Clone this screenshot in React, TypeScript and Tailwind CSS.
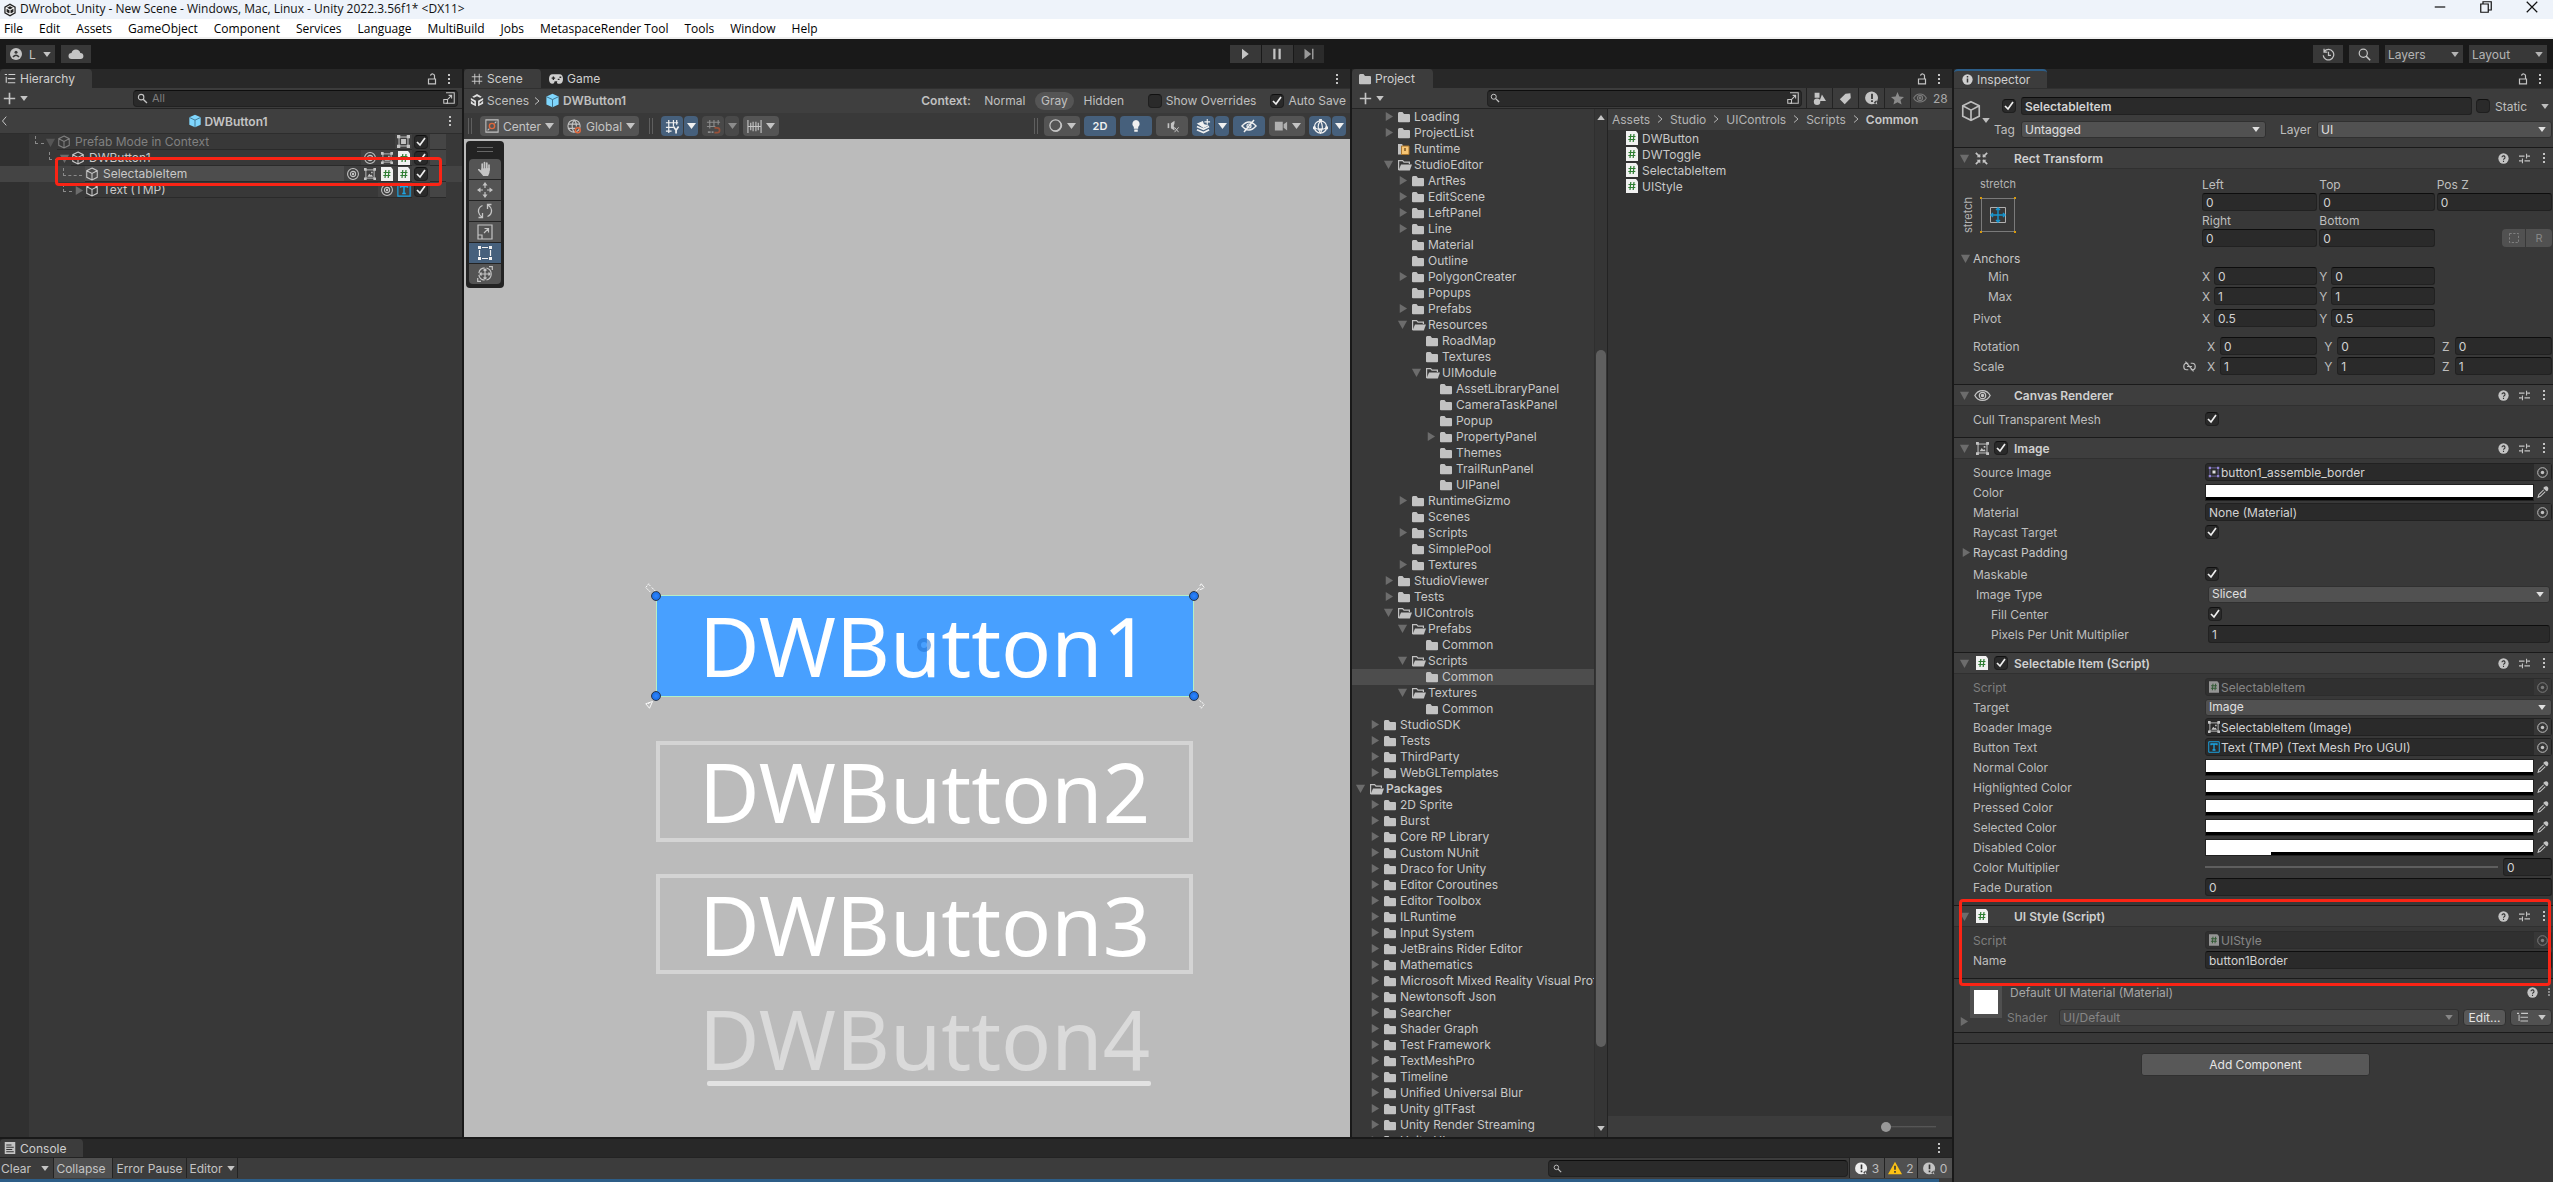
import React, { useId } from "react";

/* ---------- icons ---------- */

type IconProps = { className?: string };

function Svg({ className = "size-4", children, box = "0 0 16 16" }: IconProps & { children: React.ReactNode; box?: string }) {
  return (
    <svg viewBox={box} className={className + " shrink-0"} fill="none" stroke="currentColor" strokeWidth="1.2" aria-hidden="true">
      {children}
    </svg>
  );
}

const Down = ({ className = "w-[9px] h-[6px]" }: IconProps) => (
  <Svg className={className} box="0 0 9 6"><path d="M0 0h9L4.5 6z" fill="currentColor" stroke="none" /></Svg>
);
const Fold = ({ open, className = "size-3 text-[#6c6c6c]" }: IconProps & { open: boolean }) => (
  <Svg className={className} box="0 0 12 12">
    <path d={open ? "M1 2h10L6 11z" : "M3 1v10l8-5z"} fill="currentColor" stroke="none" />
  </Svg>
);
const Dots = ({ className = "w-2 h-3" }: IconProps) => (
  <Svg className={className} box="0 0 8 12"><path d="M3 1h2v2H3zM3 5h2v2H3zM3 9h2v2H3z" fill="currentColor" stroke="none" /></Svg>
);
const Lock = ({ className = "w-3 h-3" }: IconProps) => (
  <Svg className={className} box="0 0 12 12"><path d="M2.5 6h7v4.8h-7zM8.5 6V3.4a2 2 0 0 0-4-.8" /></Svg>
);
const Cube = ({ className = "size-[14px]" }: IconProps) => (
  <Svg className={className}><path d="M8 1.2l6 3v7.6l-6 3-6-3V4.200zM2 4.200l6 3.200 6-3.200M8 7.400v7.400" /></Svg>
);
const PrefabCube = ({ className = "size-[14px]" }: IconProps) => (
  <Svg className={className}>
    <path d="M8 .8l6.500 2.900v8.600L8 15.200l-6.500-2.900V3.700z" fill="#7fd6fd" stroke="none" />
    <path d="M1.500 3.900L8 7l6.500-3.100M8 7v8.200" stroke="#3c6d87" strokeWidth="1" />
  </Svg>
);
const Folder = ({ className = "w-3 h-[14px]" }: IconProps) => (
  <Svg className={className} box="0 0 12 14"><path d="M0 3.500Q0 2 1.200 2H4.500L6 4h5q1 0 1 1v6.500q0 .8-1 .8H1q-1 0-1-.8z" fill="#c2c2c2" stroke="none" /></Svg>
);
const FolderOpen = ({ className = "w-[14px] h-[14px]" }: IconProps) => (
  <Svg className={className} box="0 0 14 14">
    <path d="M.6 12V2.600h4L6 4.200h5.400V6" stroke="#c2c2c2" strokeWidth="1.200" />
    <path d="M3 6.500h11l-2.200 6H.5z" fill="#c2c2c2" stroke="none" />
  </Svg>
);
const RuntimeFolder = () => (
  <Svg className="w-3 h-[14px]" box="0 0 12 14">
    <path d="M0 2h4l1 1.500v9H0z" fill="#c2c2c2" stroke="none" />
    <path d="M3.500 4h7.500v8.500H3.500z" fill="#f7c574" stroke="#a9752c" strokeWidth="1" />
    <path d="M7 6v3" stroke="#7c5520" strokeWidth="1.500" />
  </Svg>
);
const Script = ({ className = "w-3 h-[14px]" }: IconProps) => (
  <Svg className={className} box="0 0 12 14">
    <path d="M0 0h10l2 2.500V14H0z" fill="#f1f1f1" stroke="none" />
    <path d="M4.800 3L4 11M8 3l-.8 8M2.500 5.500h7M2.300 8.500h7" stroke="#2e7d32" strokeWidth="1.200" />
  </Svg>
);
const Eye = ({ className = "size-4" }: IconProps) => (
  <Svg className={className}><path d="M.8 8C4 1.800 12 1.800 15.200 8 12 14.200 4 14.200.8 8z" /><circle cx="8" cy="8" r="3" /><circle cx="8" cy="8" r="1" fill="currentColor" /></Svg>
);
const Rays = ({ className = "size-[14px]" }: IconProps) => (
  <Svg className={className}>
    <circle cx="8" cy="8" r="6.200" /><circle cx="8" cy="8" r="3" /><circle cx="8" cy="8" r=".8" fill="currentColor" />
  </Svg>
);
const Picture = ({ className = "size-[13px]" }: IconProps) => (
  <Svg className={className}>
    <path d="M2.500 2.500h11v11h-11z" />
    <path d="M0 0h3.500v3.500H0zM12.500 0H16v3.500h-3.500zM0 12.500h3.500V16H0zM12.500 12.500H16V16h-3.500zM4.500 11.500l2.500-4 2 2.200 1.200-1.200 1.800 3zM9.500 5h2v2h-2z" fill="currentColor" stroke="none" />
  </Svg>
);
const RectMark = ({ className = "size-[13px]" }: IconProps) => (
  <Svg className={className}>
    <path d="M2.500 2.500h11v11h-11z" />
    <path d="M0 0h4v4H0zM12 0h4v4h-4zM0 12h4v4H0zM12 12h4v4h-4zM5 5h6v6H5z" fill="currentColor" stroke="none" />
  </Svg>
);
const SpriteMark = ({ className = "size-3" }: IconProps) => (
  <Svg className={className}>
    <path d="M2.500 2.500h11v11h-11z" stroke="#6f66a0" />
    <path d="M1 1h3v3H1zM12 1h3v3h-3zM1 12h3v3H1zM12 12h3v3h-3z" fill="#9184d6" stroke="none" />
    <path d="M6 6h4v4H6z" fill="#e0e0e0" stroke="none" />
  </Svg>
);
const TextMark = ({ className = "size-[14px]" }: IconProps) => (
  <Svg className={className}>
    <path d="M1 1h14v14H1z" stroke="#1ba6e6" strokeWidth="1.300" />
    <path d="M4 5.500V4h8v1.500M8 4v8M6 12h4" stroke="#1ba6e6" strokeWidth="1.700" />
  </Svg>
);
const Magnify = ({ className = "size-3" }: IconProps) => (
  <Svg className={className}><circle cx="6" cy="6" r="4" strokeWidth="1.600" /><path d="M9 9l5.500 5.500" strokeWidth="2" /></Svg>
);
const Picker = ({ className = "size-3" }: IconProps) => (
  <Svg className={className}><path d="M4 1h11v14H4" strokeWidth="1.400" /><path d="M1 10h5v5H1zM6.500 9.500l5-5M7.500 4.500h4v4" strokeWidth="1.400" /></Svg>
);
const Plus = ({ className = "size-[13px]" }: IconProps) => (
  <Svg className={className}><path d="M8 1v14M1 8h14" strokeWidth="2" /></Svg>
);
const Help = ({ className = "size-[11px]" }: IconProps) => (
  <Svg className={className}>
    <circle cx="8" cy="8" r="7.500" fill="#c4c4c4" stroke="none" />
    <path d="M5.800 6.300a2.200 2.200 0 1 1 3.200 2q-1 .5-1 1.500M8 11.300v1.700" stroke="#333" strokeWidth="1.600" />
  </Svg>
);
const Preset = ({ className = "size-[11px]" }: IconProps) => (
  <Svg className={className}><path d="M0 4.500h8M12 4.500h4M11 1v7M0 11.500h4M8 11.500h8M5 8v7" strokeWidth="1.600" /></Svg>
);
const Target = ({ className = "size-[11px]" }: IconProps) => (
  <Svg className={className}><circle cx="8" cy="8" r="7" strokeWidth="1.400" /><circle cx="8" cy="8" r="2.500" fill="currentColor" stroke="none" /></Svg>
);
const Dropper = ({ className = "size-3" }: IconProps) => (
  <Svg className={className}>
    <path d="M9 1.500q4-2.500 5.500 0t-.500 5l-1.500.5L8.500 3z" fill="currentColor" stroke="none" />
    <path d="M9 5L2.500 11.500 1.500 15l3-1.200L11 7.500" strokeWidth="1.400" />
  </Svg>
);
const Info = ({ className = "size-3" }: IconProps) => (
  <Svg className={className}>
    <circle cx="8" cy="8" r="7.500" fill="currentColor" stroke="none" />
    <path d="M8 3v2M8 6.500v6" stroke="#383838" strokeWidth="2.200" />
  </Svg>
);
const Alert = ({ className = "size-[14px]" }: IconProps) => (
  <Svg className={className}>
    <path d="M8 .5a7.300 7.300 0 1 1-1 14.700A7.300 7.300 0 0 1 8 .5zM10 13l4 2.500-1-5z" fill="currentColor" stroke="none" />
    <path d="M8 3v6M8 10.500v2" stroke="#333" strokeWidth="2" />
  </Svg>
);
const Warning = () => (
  <Svg className="size-[14px]">
    <path d="M8 .8L16 15H0z" fill="#fbc115" stroke="none" /><path d="M8 5.500v4.500M8 11.500v2" stroke="#333" strokeWidth="1.800" />
  </Svg>
);
const GridY = () => (
  <Svg className="size-[15px]"><path d="M4 1v14M9 1v7M1 4h13M1 9h8M1 13h6M12.500 1v5" strokeWidth="1.300" /><path d="M9 8l2.800 4L14.500 8M11.800 12v3.500" strokeWidth="1.800" /></Svg>
);
const GridSnap = () => (
  <Svg className="size-[15px]">
    <path d="M4 1v9M8.500 1v7M13 1v5M1 3.500h14M1 8h9" strokeWidth="1.200" />
    <path d="M2 14h3M6 14h2" strokeWidth="2" />
    <path d="M9 9.500h3a2.400 2.400 0 0 1 0 5H9" stroke="#d9623a" strokeWidth="1.800" />
  </Svg>
);
const Ruler = () => (
  <Svg className="size-[15px]"><path d="M1 1v14M15 1v14M4 4v8M6.500 3v10M9.500 3v10M12 4v8M1 8h14" /></Svg>
);
const UnityMark = () => (
  <Svg className="size-[14px]">
    <path d="M8 0l5.500 3-2 1.200L8 2.600 4.500 4.200 2.500 3zM1 4.500l5.800 3.300V14L1 11V8l2 1v1l2 1.200V9L1 6.800zM15 4.500L9.200 7.800V14L15 11V8l-2 1v1l-2 1.200V9l4-2.200z" fill="#e0e0e0" stroke="none" />
  </Svg>
);
const Hand = () => (
  <Svg className="size-4">
    <path d="M5.200 9V3M7.500 8V1.500M9.800 8V2M12 9V4" strokeWidth="1.700" strokeLinecap="round" />
    <path d="M4.300 7.500L12.900 7q0 5-1.800 8H6.200Q4 12 1 9q-.4-1.500 1.200-1l2.100 1.500z" fill="currentColor" stroke="none" />
  </Svg>
);
const MoveArrows = ({ className = "size-4" }: IconProps) => (
  <Svg className={className}>
    <path d="M8 3v3M8 10v3M3 8h3M10 8h3" />
    <path d="M8 0l2.500 3.500h-5zM8 16l2.500-3.500h-5zM0 8l3.500-2.500v5zM16 8l-3.500-2.500v5z" fill="currentColor" stroke="none" />
  </Svg>
);
const RotateArrows = () => (
  <Svg className="size-4"><path d="M5.500 2.500Q1 4.500 1.500 9q.5 3 3.500 5M10.500 13.500Q15 11.500 14.500 7q-.5-3-3.500-5M5.500 10v4.500H1.500M10.500 6V1.500h4" strokeWidth="1.300" /></Svg>
);
const ScaleMark = () => (
  <Svg className="size-4"><path d="M1 1h14v14H1zM1 11h4v4M7 9l4.500-4.500M7.500 4.500h4v4" /></Svg>
);
const RectTool = () => (
  <Svg className="size-4">
    <path d="M2.500 5v6M13.500 5v6M5 2.500h6M5 13.500h6" />
    <path d="M1 1h3v3H1zM12 1h3v3h-3zM1 12h3v3H1zM12 12h3v3h-3z" fill="currentColor" stroke="none" />
  </Svg>
);
const TransformTool = () => (
  <Svg className="size-4">
    <circle cx="8" cy="8" r="6.200" strokeDasharray="8 2" /><path d="M8 3v10M3 8h10M6.500 4.500L8 3l1.500 1.500M6.500 11.500L8 13l1.500-1.500M4.500 6.500L3 8l1.500 1.500M11.500 6.500L13 8l-1.500 1.500M12 .7h3.300V4M.7 12v3.300H4" />
  </Svg>
);

/* ---------- small controls ---------- */

function Check({ id, label, on = true }: { id?: string; label?: string; on?: boolean }) {
  return (
    <span className="relative grid size-[14px] shrink-0 place-items-center">
      <input id={id} aria-label={label} type="checkbox" defaultChecked={on}
        className="peer size-[14px] appearance-none rounded-sm border border-[#1f1f1f] border-t-[#101010] bg-[#2a2a2a]" />
      <svg viewBox="0 0 12 12" className="pointer-events-none absolute size-3 opacity-0 peer-checked:opacity-100" fill="none" stroke="#eee" strokeWidth="1.700" aria-hidden="true">
        <path d="M2 6l3 3 5-7" />
      </svg>
    </span>
  );
}

function Field({ id, label, value, className = "" }: { id?: string; label?: string; value: string; className?: string }) {
  return (
    <input id={id} aria-label={label} type="text" defaultValue={value}
      className={"h-[18px] w-full min-w-0 rounded-[3px] border border-[#212121] border-t-[#0d0d0d] bg-[#2a2a2a] px-[3px] text-[#d2d2d2] outline-none " + className} />
  );
}

function Drop({ id, label, value, grow = "flex-1", dim = false }: { id?: string; label?: string; value: string; grow?: string; dim?: boolean }) {
  return (
    <span className={"relative flex min-w-0 items-center " + grow + (dim ? " text-[#868686]" : " text-[#e0e0e0]")}>
      <select id={id} aria-label={label} defaultValue={value} disabled={dim}
        className={"h-[17px] w-full appearance-none rounded-[3px] border border-[#303030] px-[3px] leading-[14px] opacity-100 outline-none " + (dim ? "bg-[#454545]" : "bg-[#515151]")}>
        <option>{value}</option>
      </select>
      <span className="pointer-events-none absolute right-[6px]"><Down className="w-2 h-[5px]" /></span>
    </span>
  );
}

function ObjectField({ id, value, icon, dim = false }: { id?: string; value: string; icon?: React.ReactNode; dim?: boolean }) {
  return (
    <span className={"flex h-[18px] min-w-0 flex-1 items-center rounded-[3px] border border-[#212121] bg-[#2a2a2a] pl-[2px] " + (dim ? "opacity-50" : "")}>
      {icon}
      <input id={id} type="text" readOnly value={value} className="min-w-0 flex-1 bg-transparent px-px text-[#d2d2d2] outline-none" />
      <button aria-label={"Pick " + value} className="grid h-full w-[17px] place-items-center bg-[#373737] text-[#c4c4c4]"><Target /></button>
    </span>
  );
}

function ColorField({ id, value, alpha = false }: { id?: string; value: string; alpha?: boolean }) {
  return (
    <span className="flex h-[18px] min-w-0 flex-1 items-center">
      <button id={id} aria-label={value} className="flex h-[17px] min-w-0 flex-1 flex-col border border-[#212121] bg-white">
        <span className="w-full flex-1" />
        <span className={"h-[3px] self-end bg-black " + (alpha ? "w-4/5" : "w-full")} />
      </button>
      <button aria-label={"Sample " + value} className="grid h-full w-[18px] place-items-center text-[#c4c4c4]"><Dropper /></button>
    </span>
  );
}

/* ---------- hierarchy ---------- */

const iconBtn = "grid place-items-center text-[#c4c4c4]";

function Tab({ icon, children, width, active = true, accent = false }: { icon: React.ReactNode; children: React.ReactNode; width: string; active?: boolean; accent?: boolean }) {
  return (
    <button className={"flex h-full items-center gap-1 rounded-t-sm px-1 text-[#cfcfcf] " + width + (active ? " bg-[#3c3c3c]" : "") + (accent ? " border-t-2 border-[#2c5d87]" : "")}>
      {icon}<span>{children}</span>
    </button>
  );
}

function TabEnd({ lock = true }: { lock?: boolean }) {
  return (
    <div className="ml-auto flex items-center gap-[7px] pr-[9px]">
      {lock && <button aria-label="Lock" className={iconBtn}><Lock /></button>}
      <button aria-label="Panel menu" className={iconBtn}><Dots /></button>
    </div>
  );
}

function HRow({ indent, name, fold, icons, dim = false, selected = false }: { indent: string; name: string; fold?: boolean; icons: React.ReactNode[]; dim?: boolean; selected?: boolean }) {
  return (
    <li className={"relative flex h-4 items-center pr-4 " + indent + (selected ? " bg-[#444]" : "")}>
      <span className={"mb-1 h-2 shrink-0 border-b border-l border-dashed border-[#8a8a8a] " + (fold === undefined ? "mr-[3px] w-[19px]" : "w-[9px]")} />
      {fold !== undefined && <span className="flex w-[13px] shrink-0 justify-center"><Fold open={fold} className={dim ? "size-[11px] text-[#555]" : "size-[11px] text-[#6c6c6c]"} /></span>}
      <div className={"flex h-full min-w-0 flex-1 items-center gap-1 border-b border-[#2a2a2a] " + (dim ? "text-[#808080]" : "text-[#c8c8c8]") + (selected ? " bg-[#4d4d4d]" : "")}>
        <Cube /><span className="truncate">{name}</span>
      </div>
      {icons.map((ic, i) => <span key={i} className="grid h-full w-[17px] shrink-0 place-items-center border-b border-[#2a2a2a] bg-[#404040] text-[#c4c4c4]">{ic}</span>)}
      <span className="grid h-full w-[18px] shrink-0 place-items-center"><Check label={name + " active"} /></span>
      <span className="h-full w-4 shrink-0 border-b border-[#2a2a2a] bg-[#454545]" />
      {selected && <span className="pointer-events-none absolute -top-[9px] right-5 -bottom-[4px] left-[55px] z-10 rounded-sm border-[3px] border-[#fb2415]" />}
    </li>
  );
}

function Hierarchy() {
  return (
    <section className="flex min-h-0 min-w-0 flex-col bg-[#383838]">
      <div className="flex h-[19px] shrink-0 bg-[#282828]">
        <Tab width="w-[92px]" icon={<Svg className="size-3"><path d="M1 2h3M6 2h9M3 5v8M5 7.500h10M5 13h10" strokeWidth="1.500" /></Svg>}>Hierarchy</Tab>
        <TabEnd />
      </div>
      <div className="flex h-[21px] shrink-0 items-center border-b border-[#232323] bg-[#3c3c3c] pr-1 pl-[3px] text-[#c4c4c4]">
        <button aria-label="Create" className="flex w-[130px] items-center gap-1"><Plus /><Down className="w-2 h-[5px]" /></button>
        <label className="flex h-[17px] min-w-0 flex-1 items-center gap-1 rounded border border-[#212121] border-t-[#0d0d0d] bg-[#2a2a2a] pr-[2px] pl-[3px]">
          <Magnify className="size-[11px]" />
          <input aria-label="Search hierarchy" placeholder="All" className="min-w-0 flex-1 bg-transparent text-[11px] outline-none placeholder:text-[#7f7f7f]" />
          <Picker />
        </label>
      </div>
      <div className="flex h-[25px] shrink-0 items-center justify-between border-b border-[#2d2d2d] bg-[#3f3f3f] pr-2 text-[#c4c4c4]">
        <button aria-label="Back" className="grid"><Svg className="size-[10px]"><path d="M10 1L4 8l6 7" strokeWidth="1.600" /></Svg></button>
        <span className="flex items-center gap-[2px] font-semibold"><PrefabCube />DWButton1</span>
        <button aria-label="Prefab menu"><Dots /></button>
      </div>
      <div className="flex min-h-0 flex-1">
        <ul className="flex-1 bg-linear-to-r from-[#303030] from-[29px] to-[#383838] to-[29px]">
          <HRow indent="pl-[35px]" name="Prefab Mode in Context" fold={true} dim icons={[<RectMark />]} />
          <HRow indent="pl-[49px]" name="DWButton1" fold={true} icons={[<Rays />, <Picture className="size-3" />, <Script />]} />
          <HRow indent="pl-[63px]" name="SelectableItem" selected icons={[<Rays />, <Picture className="size-3" />, <Script />, <Script />]} />
          <HRow indent="pl-[63px]" name="Text (TMP)" fold={false} icons={[<Rays />, <TextMark />]} />
        </ul>
      </div>
    </section>
  );
}

/* ---------- scene ---------- */

const tool = "flex h-5 items-center justify-center gap-1 rounded-sm px-1 ";
const gray = "bg-[#545454] text-[#c4c4c4] ";
const blue = "bg-[#46607c] text-[#f0f0f0] ";
const Grip = () => <span className="h-4 w-1 shrink-0 border-x border-[#5f5f5f]" />;

function Handle({ className }: { className: string }) {
  return <span className={"absolute size-[10px] rounded-full border border-[#26354a] bg-radial from-[#2f86ff] to-[#0d62d8] " + className} />;
}

function SceneView() {
  const word = "absolute font-['Noto_Sans',sans-serif] text-[83px] leading-[100px] ";
  return (
    <div className="relative min-h-0 flex-1 overflow-hidden bg-[#bbb]">
      <div className="absolute top-[2px] left-[2px] flex w-[38px] flex-col items-center gap-px rounded bg-[#232323] pb-1 text-[#c4c4c4]">
        <span className="my-[6px] h-[5px] w-4 border-y border-[#666]" />
        <button aria-label="View tool" className={"grid h-5 w-8 place-items-center rounded-t " + gray}><Hand /></button>
        <button aria-label="Move tool" className={"grid h-5 w-8 place-items-center " + gray}><MoveArrows /></button>
        <button aria-label="Rotate tool" className={"grid h-5 w-8 place-items-center " + gray}><RotateArrows /></button>
        <button aria-label="Scale tool" className={"grid h-5 w-8 place-items-center " + gray}><ScaleMark /></button>
        <button aria-label="Rect tool" className={"grid h-5 w-8 place-items-center " + blue}><RectTool /></button>
        <button aria-label="Transform tool" className={"grid h-5 w-8 place-items-center rounded-b " + gray}><TransformTool /></button>
      </div>

      <div className="absolute top-[456px] left-[192px] h-[102px] w-[538px] border border-[#b5eec5] bg-[#48a0ff] text-white">
        <span className={word + "-top-px left-[42px]"}>DWButton1</span>
        <span className="absolute top-[42px] left-[260px] size-[14px] rounded-full border-4 border-[#2777d6] opacity-60" />
        <Handle className="-top-[5px] -left-[6px]" />
        <Handle className="-top-[5px] -right-[6px]" />
        <Handle className="-bottom-[5px] -left-[6px]" />
        <Handle className="-right-[6px] -bottom-[5px]" />
        <Svg className="absolute -top-[13px] -left-3 size-3"><path d="M1 6l4-5 2 3M2 7l5 5M9 6l5 5" stroke="#fff" strokeDasharray="3 1" /></Svg>
        <Svg className="absolute -top-[13px] -right-3 size-3"><path d="M15 6l-4-5-2 3M14 7l-5 2M9 6l-5 5" stroke="#fff" /></Svg>
        <Svg className="absolute -bottom-[13px] -left-3 size-3"><path d="M1 9l5 6 4-9zM4 9l3-2" stroke="#fff" /></Svg>
        <Svg className="absolute -right-3 -bottom-[13px] size-3"><path d="M15 10l-4 5-2-3M14 9L8 4" stroke="#fff" strokeDasharray="3 1" /></Svg>
      </div>
      <div className="absolute top-[602px] left-[192px] h-[101px] w-[537px] border-4 border-[#d4d4d4] text-white">
        <span className={word + "-top-1 left-[39px]"}>DWButton2</span>
      </div>
      <div className="absolute top-[735px] left-[192px] h-[100px] w-[537px] border-4 border-[#d4d4d4] text-white">
        <span className={word + "-top-1 left-[39px]"}>DWButton3</span>
      </div>
      <div className="absolute top-[845px] left-[192px] h-[102px] w-[538px] text-[#dadada]">
        <span className={word + "top-1 left-[43px]"}>DWButton4</span>
        <span className="absolute bottom-0 left-[51px] h-[5px] w-[444px] rounded-xs bg-[#e2e2e2]" />
      </div>
    </div>
  );
}

function Scene() {
  return (
    <section className="flex min-h-0 min-w-0 flex-col bg-[#3c3c3c]">
      <div className="flex h-[19px] shrink-0 bg-[#282828]">
        <Tab width="w-[77px] pl-[7px]" icon={<Svg className="size-3"><path d="M5 1v14M11 1v14M1 5h14M1 11h14" /></Svg>}>Scene</Tab>
        <Tab width="w-[72px] pl-2" active={false} icon={<Svg className="w-[14px] h-[10px]" box="0 0 16 11"><path d="M4 0h8q4 0 4 5.500T12 11 9.500 8h-3Q6 11 4 11 0 11 0 5.500T4 0z" fill="currentColor" stroke="none" /><path d="M3 4.500h4M5 2.500v4M10 6h2M12 3.500h2" stroke="#282828" strokeWidth="1.500" /></Svg>}>Game</Tab>
        <TabEnd lock={false} />
      </div>
      <div className="flex h-[25px] shrink-0 items-center border-t border-[#303030] bg-[#3f3f3f] px-1 pb-px text-[#c0c0c0]">
        <div className="flex items-center gap-[3px] pl-[2px]">
          <UnityMark /><a href="#scenes">Scenes</a>
          <Svg className="size-2 mx-px"><path d="M4 1l8 7-8 7" strokeWidth="2" /></Svg>
          <PrefabCube className="size-[15px]" /><span className="font-semibold">DWButton1</span>
        </div>
        <div className="ml-auto flex items-center">
          <span className="mr-[11px] font-semibold">Context:</span>
          <button className="mr-[7px] w-[46px]">Normal</button>
          <button className="h-[18px] w-[39px] rounded-full bg-[#555]">Gray</button>
          <button className="mr-[14px] w-[60px]">Hidden</button>
          <label className="mr-[14px] flex items-center gap-1"><Check on={false} />Show Overrides</label>
          <label className="flex items-center gap-1"><Check />Auto Save</label>
        </div>
      </div>
      <div className="flex h-[26px] shrink-0 items-center gap-1 bg-[#393939] px-1">
        <Grip />
        <button className={tool + gray + "ml-1 w-[79px]"}>
          <Svg className="size-[14px]"><path d="M1 1h14v14H1zM3 13l2-2M11 5l2-2" /><circle cx="8" cy="8" r="3" stroke="#e0683c" strokeWidth="1.600" /></Svg>Center<Down />
        </button>
        <button className={tool + gray + "w-[76px]"}>
          <Svg className="size-[15px]"><circle cx="7.500" cy="7.500" r="6.500" /><path d="M1 5.500h13M1 10h8M7.500 1q-4 6.500 0 13M7.500 1q3 3 2.500 7" /><circle cx="11.500" cy="12" r="2.600" stroke="#e0683c" strokeWidth="1.600" /></Svg>Global<Down />
        </button>
        <span className="ml-[6px] flex"><Grip /></span>
        <span className="ml-1 flex gap-px"><button aria-label="Grid" className={tool + blue + "w-[22px]"}><GridY /></button><button aria-label="Grid options" className={tool + blue + "w-[14px]"}><Down /></button></span>
        <span className="flex gap-px opacity-60"><button aria-label="Snap" className={tool + gray + "w-[22px]"}><GridSnap /></button><button aria-label="Snap options" className={tool + gray + "w-[14px]"}><Down /></button></span>
        <button aria-label="Snap increment" className={tool + gray + "w-9"}><Ruler /><Down /></button>

        <div className="ml-auto flex items-center gap-1">
          <Grip />
          <button aria-label="Shading" className={tool + gray + "ml-[2px] w-9"}><Svg className="size-[14px]"><circle cx="7.500" cy="7.500" r="6.500" strokeWidth="1.400" /><path d="M11.500 2.500q3.500 5-.5 8.500t-9 0q2.500 4 6.500 3.500t6-5-3-7z" fill="currentColor" stroke="none" /></Svg><Down /></button>
          <button className={tool + blue + "w-8 text-[11px] font-semibold"}>2D</button>
          <button aria-label="Lighting" className={tool + blue + "w-8"}><Svg className="size-[14px]"><path d="M8 1a4.500 4.500 0 0 1 2.500 8v2h-5V9A4.500 4.500 0 0 1 8 1zM6 12h4v2.500H6z" fill="currentColor" stroke="none" /></Svg></button>
          <button aria-label="Audio" className={tool + gray + "w-8"}><Svg className="size-[13px]"><path d="M3 4v6" strokeWidth="2" /><path d="M10.500 1v3q-2 3 0 6v3L6 10V4z" fill="currentColor" stroke="none" /><path d="M10.500 9l5 6M15.500 9l-5 6" /></Svg></button>
          <span className="flex gap-px"><button aria-label="Effects" className={tool + blue + "w-[22px]"}><Svg className="size-[15px]"><path d="M1 8l7 3 6-3M1 11.500l7 3 6-3" strokeWidth="1.800" /><path d="M2 5l5-2 1 3 4 1-4 2z" fill="currentColor" /><path d="M12 0v6M9 3h6" /></Svg></button><button aria-label="Effects options" className={tool + blue + "w-[14px]"}><Down /></button></span>
          <button aria-label="Scene visibility" className={tool + blue + "w-8"}><Svg className="size-4"><path d="M1 8q7-8 14 0-7 8-14 0zM13 2L3 14" strokeWidth="1.500" /><circle cx="8" cy="8" r="2" /></Svg></button>
          <button aria-label="Camera" className={tool + gray + "w-9"}><Svg className="size-[14px]"><path d="M1 3h9v10H1zM11 6l4-3v10l-4-3z" fill="#b0b0b0" stroke="none" /></Svg><Down /></button>
          <span className="flex gap-px"><button aria-label="Gizmos" className={tool + blue + "w-[22px]"}><Svg className="size-[15px]"><circle cx="8" cy="8.500" r="6.500" strokeWidth="1.400" /><path d="M8 2q-5 6 0 13 4-6 0-13M1.500 9.500q6.500 3 13 0" /><path d="M6.500 0h3v3h-3zM0 8h3v3H0zM13 8h3v3h-3zM6.500 10h3v2.500h-3z" fill="currentColor" stroke="none" /></Svg></button><button aria-label="Gizmo options" className={tool + blue + "w-[14px]"}><Down /></button></span>
        </div>
      </div>
      <SceneView />
    </section>
  );
}

/* ---------- project ---------- */

/* state: "+" collapsed, "-" expanded, " " leaf */
type Node = [number, "+" | "-" | " ", string];
const tree: Node[] = [
  [2, "+", "Loading"], [2, "+", "ProjectList"], [2, " ", "Runtime"], [2, "-", "StudioEditor"],
  [3, "+", "ArtRes"], [3, "+", "EditScene"], [3, "+", "LeftPanel"], [3, "+", "Line"], [3, " ", "Material"], [3, " ", "Outline"],
  [3, "+", "PolygonCreater"], [3, " ", "Popups"], [3, "+", "Prefabs"], [3, "-", "Resources"],
  [4, " ", "RoadMap"], [4, " ", "Textures"], [4, "-", "UIModule"],
  [5, " ", "AssetLibraryPanel"], [5, " ", "CameraTaskPanel"], [5, " ", "Popup"], [5, "+", "PropertyPanel"], [5, " ", "Themes"], [5, " ", "TrailRunPanel"], [5, " ", "UIPanel"],
  [3, "+", "RuntimeGizmo"], [3, " ", "Scenes"], [3, "+", "Scripts"], [3, " ", "SimplePool"], [3, "+", "Textures"],
  [2, "+", "StudioViewer"], [2, "+", "Tests"], [2, "-", "UIControls"],
  [3, "-", "Prefabs"], [4, " ", "Common"], [3, "-", "Scripts"], [4, " ", "Common"], [3, "-", "Textures"], [4, " ", "Common"],
  [1, "+", "StudioSDK"], [1, "+", "Tests"], [1, "+", "ThirdParty"], [1, "+", "WebGLTemplates"],
  [0, "-", "Packages"],
  [1, "+", "2D Sprite"], [1, "+", "Burst"], [1, "+", "Core RP Library"], [1, "+", "Custom NUnit"], [1, "+", "Draco for Unity"], [1, "+", "Editor Coroutines"],
  [1, "+", "Editor Toolbox"], [1, "+", "ILRuntime"], [1, "+", "Input System"], [1, "+", "JetBrains Rider Editor"], [1, "+", "Mathematics"],
  [1, "+", "Microsoft Mixed Reality Visual Profiler"], [1, "+", "Newtonsoft Json"], [1, "+", "Searcher"], [1, "+", "Shader Graph"], [1, "+", "Test Framework"],
  [1, "+", "TextMeshPro"], [1, "+", "Timeline"], [1, "+", "Unified Universal Blur"], [1, "+", "Unity glTFast"], [1, "+", "Unity Render Streaming"], [1, "+", "Unity UI"],
];
const indents = ["pl-[3px]", "pl-[17px]", "pl-[31px]", "pl-[45px]", "pl-[59px]", "pl-[73px]"];
const selectedNode = 35;

function Project() {
  const crumbs = ["Assets", "Studio", "UIControls", "Scripts"];
  const filter = "grid h-full place-items-center border-l border-[#232323] ";
  return (
    <section className="flex min-h-0 min-w-0 flex-col bg-[#383838]">
      <div className="flex h-[19px] shrink-0 bg-[#282828]">
        <Tab width="w-[81px] pl-[7px]" icon={<Folder />}>Project</Tab>
        <TabEnd />
      </div>
      <div className="flex h-[21px] shrink-0 items-center border-b border-[#232323] bg-[#3c3c3c] pl-[7px] text-[#c4c4c4]">
        <button aria-label="Create asset" className="flex w-32 items-center gap-1"><Plus /><Down className="w-2 h-[5px]" /></button>
        <label className="mr-1 flex h-[17px] min-w-0 flex-1 items-center rounded border border-[#212121] border-t-[#0d0d0d] bg-[#2a2a2a] px-[2px]">
          <Magnify className="size-[10px]" />
          <input aria-label="Search project" className="min-w-0 flex-1 bg-transparent outline-none" /><Picker />
        </label>
        <button aria-label="Filter by type" className={filter + "w-[26px]"}><Svg className="size-[13px]"><path d="M2 1h6v6H2zM11 3l5 8h-8z" fill="currentColor" stroke="none" /><circle cx="5" cy="12" r="4" fill="currentColor" stroke="none" /></Svg></button>
        <button aria-label="Filter by label" className={filter + "w-[26px]"}><Svg className="size-[13px]"><path d="M8 2l6-.5.5 6L7 15 1 9z" fill="currentColor" stroke="none" /></Svg></button>
        <button aria-label="Filter by log" className={filter + "w-[26px]"}><Alert /></button>
        <button aria-label="Favorites" className={filter + "w-[26px] text-[#8a8a8a]"}><Svg className="size-[13px]"><path d="M8 0l2.300 5.500 5.700.5-4.300 3.800L13 15.500l-5-3-5 3 1.300-5.700L0 6l5.700-.5z" fill="currentColor" stroke="none" /></Svg></button>
        <button className={filter + "w-[42px] grid-flow-col gap-px pr-[2px] text-[#a8a8a8]"}><Eye className="size-[14px] text-[#7a7a7a]" />28</button>
      </div>
      <div className="flex min-h-0 flex-1">
        <div className="flex w-[256px] shrink-0 border-r border-[#232323]">
          <ul className="min-w-0 flex-1 overflow-hidden">
            {tree.map(([depth, state, name], i) => (
              <li key={i} className={"flex h-4 items-center pb-px whitespace-nowrap text-[#c8c8c8] " + indents[depth] + (i === selectedNode ? " bg-[#4d4d4d]" : "") + (depth === 0 ? " font-semibold" : "")}>
                <span className="mr-[3px] w-3 shrink-0">{state !== " " && <Fold open={state === "-"} className="size-[11px] text-[#6c6c6c]" />}</span>
                <span className="flex w-4 shrink-0">{name === "Runtime" ? <RuntimeFolder /> : state === "-" ? <FolderOpen /> : <Folder />}</span>
                <span>{name}</span>
              </li>
            ))}
          </ul>
          <div className="flex w-[13px] flex-col items-center border-l border-[#2f2f2f] bg-[#353535] py-[6px] text-[#c4c4c4]">
            <Down className="w-2 h-[5px] rotate-180" />
            <div className="flex w-full flex-1 flex-col items-center pt-1 pb-1">
              <span className="grow-[227]" />
              <span className="w-[10px] grow-[699] rounded-full bg-[#5f5f5f]" />
              <span className="grow-[75]" />
            </div>
            <Down className="w-2 h-[5px]" />
          </div>
        </div>
        <div className="flex min-w-0 flex-1 flex-col bg-[#333]">
          <nav className="flex h-[21px] items-center gap-[6px] bg-[#3f3f3f] pb-px pl-1 text-[#b4b4b4]">
            {crumbs.map((c) => (
              <React.Fragment key={c}>
                <a href="#folder">{c}</a>
                <Svg className="size-2"><path d="M4 1l8 7-8 7" strokeWidth="2" /></Svg>
              </React.Fragment>
            ))}
            <span className="font-semibold text-[#c8c8c8]">Common</span>
          </nav>
          <ul className="flex-1">
            {["DWButton", "DWToggle", "SelectableItem", "UIStyle"].map((f) => (
              <li key={f} className="flex h-4 items-center gap-1 pl-[18px] text-[#c8c8c8]"><Script />{f}</li>
            ))}
          </ul>
          <div className="flex h-[21px] items-center justify-end bg-[#3c3c3c] pr-4">
            <input type="range" aria-label="Icon size" defaultValue={0} min={0} max={100}
              className="h-3 w-[55px] appearance-none bg-linear-to-b from-transparent from-[5px] via-[#5e5e5e] via-[5px] to-transparent to-[7px] [&::-webkit-slider-thumb]:size-[10px] [&::-webkit-slider-thumb]:appearance-none [&::-webkit-slider-thumb]:rounded-full [&::-webkit-slider-thumb]:bg-[#999]" />
          </div>
        </div>
      </div>
    </section>
  );
}

/* ---------- console ---------- */

function Console() {
  const item = "h-full border-r border-[#232323] text-[#c4c4c4] ";
  const count = "flex h-full items-center justify-center gap-1 border-l border-[#232323] text-[#bdbdbd] ";
  return (
    <section className="flex shrink-0 flex-col bg-[#3c3c3c]">
      <div className="flex h-[19px] border-b border-[#232323] bg-[#282828]">
        <Tab width="w-[83px]" icon={<Svg className="size-3"><path d="M1 0h14v16H1z" fill="#c4c4c4" stroke="none" /><path d="M3 4h7M3 7h10M3 10h8M3 13h10" stroke="#333" strokeWidth="1.500" /></Svg>}>Console</Tab>
        <TabEnd lock={false} />
      </div>
      <div className="flex h-5 items-center">
        <button className="w-9 pl-px text-left text-[#c4c4c4]">Clear</button>
        <button aria-label="Clear options" className={item + "grid w-[18px] place-items-center"}><Down className="w-2 h-[5px]" /></button>
        <button className={item + "w-[59px] bg-[#505050] pr-1"}>Collapse</button>
        <button className={item + "w-[74px]"}>Error Pause</button>
        <button className={item + "flex w-[51px] items-center justify-center gap-1"}>Editor<Down className="w-2 h-[5px]" /></button>
        <label className="mr-px ml-auto flex h-[17px] w-[300px] items-center rounded border border-[#212121] border-t-[#0d0d0d] bg-[#2a2a2a] px-1 text-[#c4c4c4]">
          <Magnify className="size-[9px]" /><input aria-label="Search console" className="min-w-0 flex-1 bg-transparent outline-none" />
        </label>
        <button className={count + "w-[35px] bg-[#505050]"}><Alert className="size-[13px] text-[#eee]" />3</button>
        <button className={count + "w-[33px] bg-[#505050]"}><Warning />2</button>
        <button className={count + "w-[35px] bg-[#505050]"}><Alert className="size-[13px] text-[#c4c4c4]" />0</button>
      </div>
      <div className="mt-px mr-[13px] h-[3px] bg-[#2c5d87]" />
    </section>
  );
}

/* ---------- inspector ---------- */

function SectionActions() {
  return (
    <div className="ml-auto flex items-center gap-[10px] pr-[5px]">
      <button aria-label="Help"><Help /></button><button aria-label="Presets"><Preset /></button><button aria-label="Component menu"><Dots /></button>
    </div>
  );
}

function Section({ title, icon, check, children, boxed = false }: { title: string; icon: React.ReactNode; check?: boolean; children: React.ReactNode; boxed?: boolean }) {
  return (
    <section className="relative">
      <header className="flex h-[22px] items-center border-t border-b border-t-[#1a1a1a] border-b-[#303030] bg-[#3e3e3e] text-[#c4c4c4]">
        <span className="flex w-[19px] shrink-0 pl-[5px]"><Fold open className="size-[11px] text-[#6c6c6c]" /></span>
        <span className="flex w-[18px] shrink-0 justify-center">{icon}</span>
        <span className="flex w-[23px] shrink-0 pl-[3px]">{check && <Check label={title + " enabled"} />}</span>
        <h2 className="font-semibold text-[#d0d0d0]">{title}</h2>
        <SectionActions />
      </header>
      <div className="pt-[3px] pb-2">{children}</div>
      {boxed && <span className="pointer-events-none absolute -top-[6px] right-[2px] -bottom-2 left-[5px] z-10 rounded-sm border-[3px] border-[#fb2415]" />}
    </section>
  );
}

function Row({ label, indent = "pl-[19px]", dim = false, inset = false, children }: { label: string; indent?: string; dim?: boolean; inset?: boolean; children: (id: string) => React.ReactNode }) {
  const id = useId();
  return (
    <div className={"flex h-5 items-center " + (inset ? "pr-[3px]" : "pr-px")}>
      <label htmlFor={id} className={"shrink-0 whitespace-nowrap " + indent + (inset ? " w-[254px]" : " w-[251px]") + (dim ? " text-[#7f7f7f]" : " text-[#bebebe]")}>{label}</label>
      {children(id)}
    </div>
  );
}

function VectorRow({ label, indent = "pl-[19px]", values, wide = false, extra }: { label: string; indent?: string; values: [string, string][]; wide?: boolean; extra?: React.ReactNode }) {
  return (
    <fieldset className="flex h-5 items-center pr-px text-[#bebebe]">
      <span className={"flex w-[248px] shrink-0 items-center justify-between pr-[6px] " + indent}>{label}{extra}</span>
      <div className="grid flex-1 grid-cols-3 gap-x-[2px]">
        {values.map(([axis, v]) => (
          <label key={axis} className="flex items-center">
            <span className={wide ? "w-[18px] shrink-0 text-center" : "w-3 shrink-0"}>{axis}</span>
            <Field value={v} label={label + " " + axis} />
          </label>
        ))}
      </div>
    </fieldset>
  );
}

function RectTransform() {
  const cell = "flex flex-col text-[#bebebe]";
  return (
    <section>
      <header className="flex h-[22px] items-center border-t border-b border-t-[#1a1a1a] border-b-[#303030] bg-[#3e3e3e] text-[#c4c4c4]">
        <span className="flex w-[19px] shrink-0 pl-[5px]"><Fold open className="size-[11px] text-[#6c6c6c]" /></span>
        <span className="flex w-[41px] shrink-0 pl-[2px]">
          <Svg className="size-[13px]"><path d="M1 1l5 5M15 1l-5 5M1 15l5-5M15 15l-5-5" strokeWidth="2" /><path d="M6.500 2v4.500H2zM9.500 2v4.500H14zM6.500 14V9.500H2zM9.500 14V9.500H14z" fill="currentColor" stroke="none" /></Svg>
        </span>
        <h2 className="font-semibold text-[#d0d0d0]">Rect Transform</h2>
        <SectionActions />
      </header>
      <div className="flex pt-2 pr-px">
        <div className="flex w-[248px] shrink-0 items-start gap-[5px] text-[11px] text-[#b4b4b4]">
          <span className="mt-[20px] ml-2 rotate-180 leading-3 [writing-mode:vertical-rl]">stretch</span>
          <button aria-label="Anchor presets" className="flex flex-col items-center">
            <span className="leading-[14px]">stretch</span>
            <Svg className="mt-[5px] size-[38px]" box="0 0 38 38">
              <path d="M2.500 2.500h33v33h-33z" stroke="#7a7a7a" strokeWidth="1" />
              <path d="M11.500 11.500h15v15h-15z" stroke="#b0b0b0" strokeWidth="1" />
              <path d="M19 12v14M12 19h14M17 14l2-2 2 2M17 24l2 2 2-2M14 17l-2 2 2 2M24 17l2 2-2 2" stroke="#1596d1" strokeWidth="1.400" />
              <path d="M1 1h2v2H1zM35 1h2v2h-2zM1 35h2v2H1zM35 35h2v2h-2z" fill="#d89a0c" stroke="none" />
            </Svg>
          </button>
        </div>
        <div className="grid flex-1 grid-cols-3 gap-x-[2px] gap-y-[2px]">
          {["Left", "Top", "Pos Z", "Right", "Bottom"].map((l) => (
            <label key={l} className={cell}><span className="h-4 leading-4">{l}</span><Field value="0" /></label>
          ))}
          <div className="flex items-end justify-end gap-px text-[#858585]">
            <button aria-label="Blueprint mode" className="grid h-[18px] w-[23px] place-items-center rounded-l-sm bg-[#515151]"><Svg className="size-3"><path d="M2 2h12v12H2z" strokeDasharray="3 2" /></Svg></button>
            <button aria-label="Raw edit mode" className="grid h-[18px] w-[26px] place-items-center rounded-r-sm bg-[#515151] text-[11px]">R</button>
          </div>
        </div>
      </div>
      <div className="mt-px flex h-[18px] items-center pt-[2px] text-[#c8c8c8]"><span className="flex w-[19px] pl-[6px]"><Fold open className="size-[11px] text-[#6c6c6c]" /></span>Anchors</div>
      <VectorRow label="Min" indent="pl-[34px]" values={[["X", "0"], ["Y", "0"]]} />
      <VectorRow label="Max" indent="pl-[34px]" values={[["X", "1"], ["Y", "1"]]} />
      <div className="mt-[2px]"><VectorRow label="Pivot" values={[["X", "0.5"], ["Y", "0.5"]]} /></div>
      <div className="mt-2 pb-2">
        <VectorRow label="Rotation" wide values={[["X", "0"], ["Y", "0"], ["Z", "0"]]} />
        <VectorRow label="Scale" wide values={[["X", "1"], ["Y", "1"], ["Z", "1"]]}
          extra={<Svg className="size-[13px]"><path d="M6.500 4H4.500a3.500 4 0 0 0 0 8h2M9.500 4h2a3.500 4 0 0 1 0 8h-2M5 8h6M3 2l10 12" strokeWidth="1.500" /></Svg>} />
      </div>
    </section>
  );
}

function Inspector() {
  const colors = ["Normal Color", "Highlighted Color", "Pressed Color", "Selected Color"];
  return (
    <aside className="flex min-h-0 min-w-0 flex-col bg-[#383838]">
      <div className="flex h-[19px] shrink-0 bg-[#282828]">
        <Tab width="w-[93px] pl-2" accent icon={<Info className="size-[11px]" />}>Inspector</Tab>
        <TabEnd />
      </div>
      <div className="h-[59px] shrink-0 border-t border-[#303030] bg-[#3c3c3c] pt-2 pr-px text-[#bebebe]">
        <div className="flex">
          <div className="flex w-12 shrink-0 items-start pt-[3px] pl-[6px]"><Cube className="size-[22px]" /><Down className="mt-[18px] w-2 h-[5px]" /></div>
          <div className="flex min-w-0 flex-1 flex-col gap-[6px]">
            <div className="flex items-center">
              <Check label="Active" /><span className="w-[6px]" />
              <Field label="Name" value="SelectableItem" className="font-semibold" />
              <label className="ml-1 flex shrink-0 items-center gap-[5px]"><Check on={false} /><span className="w-[41px]">Static</span></label>
              <Down className="mr-[3px] ml-[5px] w-2 h-[5px]" />
            </div>
            <div className="-ml-2 flex items-center">
              <label htmlFor="tag" className="w-[27px]">Tag</label><Drop id="tag" value="Untagged" grow="flex-[245]" />
              <label htmlFor="layer" className="w-[51px] pl-[14px]">Layer</label><Drop id="layer" value="UI" grow="flex-[235]" />
            </div>
          </div>
        </div>
      </div>

      <RectTransform />

      <Section title="Canvas Renderer" icon={<Eye className="size-[17px]" />}>
        <Row label="Cull Transparent Mesh">{(id) => <Check id={id} />}</Row>
      </Section>

      <Section title="Image" icon={<Picture />} check>
        <Row label="Source Image">{(id) => <ObjectField id={id} value="button1_assemble_border" icon={<SpriteMark />} />}</Row>
        <Row label="Color">{(id) => <ColorField id={id} value="Color" />}</Row>
        <Row label="Material">{(id) => <ObjectField id={id} value="None (Material)" />}</Row>
        <Row label="Raycast Target">{(id) => <Check id={id} />}</Row>
        <div className="mb-[2px] flex h-5 items-center text-[#c8c8c8]"><span className="flex w-[19px] pl-[6px]"><Fold open={false} className="size-[11px] text-[#6c6c6c]" /></span>Raycast Padding</div>
        <Row label="Maskable">{(id) => <Check id={id} />}</Row>
        <Row label="Image Type" indent="pl-[22px]" inset>{(id) => <Drop id={id} value="Sliced" />}</Row>
        <Row label="Fill Center" indent="pl-[37px]" inset>{(id) => <Check id={id} />}</Row>
        <Row label="Pixels Per Unit Multiplier" indent="pl-[37px]" inset>{(id) => <Field id={id} value="1" />}</Row>
      </Section>

      <Section title="Selectable Item (Script)" icon={<Script />} check>
        <Row label="Script" dim>{(id) => <ObjectField id={id} dim value="SelectableItem" icon={<Script className="ml-px mr-px w-[10px] h-3" />} />}</Row>
        <Row label="Target">{(id) => <Drop id={id} value="Image" />}</Row>
        <Row label="Boader Image">{(id) => <ObjectField id={id} value="SelectableItem (Image)" icon={<Picture className="size-3 text-[#c4c4c4]" />} />}</Row>
        <Row label="Button Text">{(id) => <ObjectField id={id} value="Text (TMP) (Text Mesh Pro UGUI)" icon={<TextMark className="size-3" />} />}</Row>
        {colors.map((c) => <Row key={c} label={c}>{(id) => <ColorField id={id} value={c} />}</Row>)}
        <Row label="Disabled Color">{(id) => <ColorField id={id} value="Disabled Color" alpha />}</Row>
        <Row label="Color Multiplier">
          {(id) => (
            <>
              <input id={id} type="range" defaultValue={0} className="mr-[5px] h-[2px] min-w-0 flex-1 appearance-none bg-[#5e5e5e] [&::-webkit-slider-thumb]:appearance-none" />
              <span className="flex w-[49px]"><Field value="0" label="Color Multiplier value" /></span>
            </>
          )}
        </Row>
        <Row label="Fade Duration">{(id) => <Field id={id} value="0" />}</Row>
      </Section>

      <Section title="UI Style (Script)" icon={<Script />} boxed>
        <Row label="Script" dim>{(id) => <ObjectField id={id} dim value="UIStyle" icon={<Script className="ml-px mr-px w-[10px] h-3" />} />}</Row>
        <Row label="Name">{(id) => <Field id={id} value="button1Border" />}</Row>
      </Section>

      <section className="flex h-[55px] shrink-0 border-t border-b border-[#1a1a1a] bg-[#3c3c3c] pr-px">
        <div className="flex w-12 shrink-0 pl-1">
          <span className="flex w-3 items-end pb-[5px]"><Fold open={false} className="size-[11px] text-[#6c6c6c]" /></span>
          <span className="mt-[7px] size-8 border-4 border-[#4f4f4f] bg-white" />
        </div>
        <div className="flex min-w-0 flex-1 flex-col">
          <div className="flex h-[26px] items-center pl-2 text-[#a6a6a6]">
            <h2>Default UI Material (Material)</h2>
            <div className="ml-auto flex items-center gap-2"><Help /><Dots className="w-[6px] h-3 text-[#c4c4c4]" /></div>
          </div>
          <div className="flex h-[26px] items-center pb-px pl-[5px]">
            <label htmlFor="shader" className="w-[52px] text-[#7f7f7f]">Shader</label>
            <Drop id="shader" value="UI/Default" dim />
            <button className="mr-1 ml-1 h-[17px] w-[43px] rounded-sm border border-[#303030] bg-[#585858] leading-[14px] text-[#e6e6e6]">Edit...</button>
            <button aria-label="Material options" className="flex h-[17px] w-[42px] items-center justify-center gap-[10px] rounded-sm border border-[#303030] bg-[#515151] text-[#c8c8c8]">
              <Svg className="size-[11px]"><path d="M0 2h3M6 2h10M3 4v9M5 7.500h11M5 13h11" strokeWidth="1.500" /></Svg><Down className="w-2 h-[5px]" />
            </button>
          </div>
        </div>
      </section>
      <div className="mt-[10px] flex justify-center border-t border-[#1a1a1a] pt-[9px] pl-1">
        <button className="h-[23px] w-[229px] rounded-[3px] border border-[#303030] bg-[#585858] text-[#e6e6e6]">Add Component</button>
      </div>
    </aside>
  );
}

/* ---------- window ---------- */

export default function App() {
  const menus = ["File", "Edit", "Assets", "GameObject", "Component", "Services", "Language", "MultiBuild", "Jobs", "MetaspaceRender Tool", "Tools", "Window", "Help"];
  const bar = "grid h-[18px] place-items-center bg-[#383838] text-[#c4c4c4] ";
  return (
    <div className="flex h-screen flex-col overflow-hidden bg-[#191919] font-[Inter,sans-serif] text-[12px] leading-[15px] text-[#c4c4c4]">
      <header className="flex h-[19px] shrink-0 items-center bg-[#eef3fa] font-['Open_Sans','Noto_Sans',sans-serif] text-[12px] text-[#111]">
        <Svg className="mx-[3px] size-[14px] text-[#222]"><path d="M8 .5l6.500 3.700v7.600L8 15.500l-6.500-3.700V4.200z" fill="#222" stroke="none" /><path d="M8 3l4.500 2.500v5L8 13l-4.500-2.500v-5zM8 8v5M8 8L3.500 5.500M8 8l4.500-2.500" stroke="#eee" /></Svg>
        <h1 className="pb-[3px]">DWrobot_Unity - New Scene - Windows, Mac, Linux - Unity 2022.3.56f1* &lt;DX11&gt;</h1>
        <div className="ml-auto flex items-center gap-[34px] pr-[15px] pb-[6px]">
          <button aria-label="Minimize"><Svg className="size-3"><path d="M1 8h14" strokeWidth="1.600" /></Svg></button>
          <button aria-label="Restore"><Svg className="size-3"><path d="M1 4h10v11H1zM4 4V1h11v11h-4" strokeWidth="1.600" /></Svg></button>
          <button aria-label="Close"><Svg className="size-3"><path d="M1 1l14 14M15 1L1 15" strokeWidth="1.600" /></Svg></button>
        </div>
      </header>
      <nav className="flex h-5 shrink-0 items-center gap-4 border-b-2 border-[#f0f0f0] bg-white pl-1 font-['Open_Sans','Noto_Sans',sans-serif] text-black">
        {menus.map((m) => <button key={m}>{m}</button>)}
      </nav>
      <div className="grid h-[30px] shrink-0 grid-cols-[1fr_auto_1fr] items-center px-[6px]">
        <div className="flex gap-[6px]">
          <button className={bar + "w-[49px] grid-flow-col"}><Svg className="size-3"><circle cx="8" cy="8" r="8" fill="#c4c4c4" stroke="none" /><circle cx="8" cy="5.500" r="2" fill="#383838" stroke="none" /><path d="M4 12q4-5 8 0" stroke="#383838" strokeWidth="2" /></Svg>L<Down className="w-2 h-[5px]" /></button>
          <button aria-label="Cloud" className={bar + "w-[30px]"}><Svg className="size-4"><path d="M3.500 13a3 3 0 0 1 0-6 4.500 4.500 0 0 1 8.800 0 3 3 0 0 1 .2 6z" fill="currentColor" stroke="none" /></Svg></button>
        </div>
        <div className="flex gap-px">
          <button aria-label="Play" className={bar + "w-[31px]"}><Svg className="size-3"><path d="M4 1v14l9-7z" fill="currentColor" stroke="none" /></Svg></button>
          <button aria-label="Pause" className={bar + "w-[31px]"}><Svg className="size-3"><path d="M4.500 1v14M11.500 1v14" strokeWidth="3" /></Svg></button>
          <button aria-label="Step" className="grid h-[18px] w-[30px] place-items-center bg-[#2b2b2b] text-[#999]"><Svg className="size-3"><path d="M2 1v14l9-7z" fill="currentColor" stroke="none" /><path d="M13 1v14" strokeWidth="2" /></Svg></button>
        </div>
        <div className="flex justify-end gap-[6px]">
          <button aria-label="History" className={bar + "w-[30px]"}><Svg className="size-[13px]"><path d="M3 4a6.500 6.500 0 1 1-1.500 5M2.500 1v4h4M8 4.500v4.500h3" strokeWidth="1.500" /></Svg></button>
          <button aria-label="Search" className={bar + "w-[30px]"}><Svg className="size-[13px]"><circle cx="6.500" cy="6.500" r="5" strokeWidth="1.500" /><path d="M10 10l5 5" strokeWidth="1.800" /></Svg></button>
          <button className="flex h-[18px] w-[78px] items-center justify-between bg-[#383838] pr-1 pl-[3px] text-[#b4b4b4]">Layers<Down className="w-2 h-[5px]" /></button>
          <button className="flex h-[18px] w-[78px] items-center justify-between bg-[#383838] pr-1 pl-[3px] text-[#b4b4b4]">Layout<Down className="w-2 h-[5px]" /></button>
        </div>
      </div>
      <main className="grid min-h-0 flex-1 grid-cols-[1952fr_599fr] gap-[2px]">
        <div className="flex min-h-0 min-w-0 flex-col gap-[2px]">
          <div className="grid min-h-0 flex-1 grid-cols-[462fr_886fr_600fr] grid-rows-[minmax(0,1fr)] gap-[2px]">
            <Hierarchy />
            <Scene />
            <Project />
          </div>
          <Console />
        </div>
        <Inspector />
      </main>
    </div>
  );
}
